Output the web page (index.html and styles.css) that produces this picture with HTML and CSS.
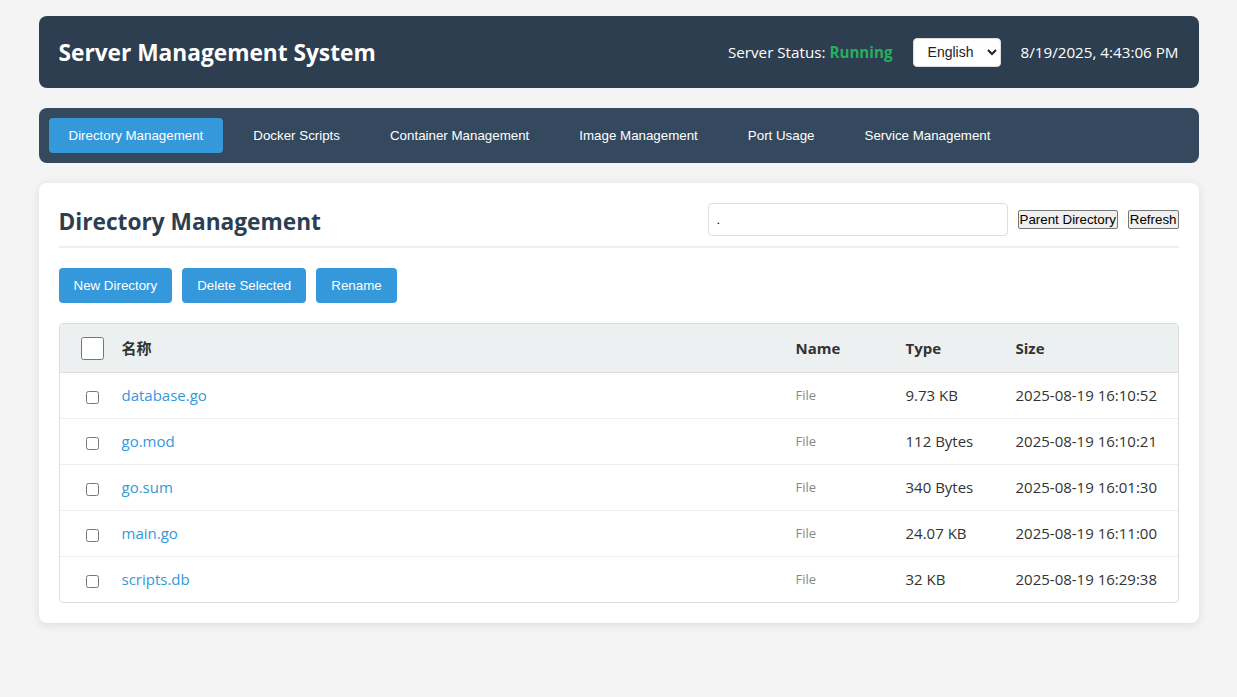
FILE: index.html
```html
<!DOCTYPE html>
<html lang="en">
<head>
<meta charset="utf-8">
<title>Server Management System</title>
<link rel="stylesheet" href="styles.css">
</head>
<body>
<div class="container">
  <header class="topbar">
    <h1 class="title">Server Management System</h1>
    <div class="topbar-right">
      <span class="status">Server Status: <strong class="running">Running</strong></span>
      <select class="lang"><option>English</option><option>中文</option></select>
      <span class="clock">8/19/2025, 4:43:06 PM</span>
    </div>
  </header>

  <nav class="tabs">
    <button class="tab active">Directory Management</button>
    <button class="tab">Docker Scripts</button>
    <button class="tab">Container Management</button>
    <button class="tab">Image Management</button>
    <button class="tab">Port Usage</button>
    <button class="tab">Service Management</button>
  </nav>

  <section class="card">
    <div class="card-head">
      <h2 class="card-title">Directory Management</h2>
      <div class="path-tools">
        <input class="path" type="text" value=".">
        <button class="plain">Parent Directory</button>
        <button class="plain">Refresh</button>
      </div>
    </div>

    <div class="actions">
      <button class="btn">New Directory</button>
      <button class="btn">Delete Selected</button>
      <button class="btn">Rename</button>
    </div>

    <div class="table-wrap">
      <table class="files">
        <colgroup>
          <col class="c-check"><col><col class="c-mid"><col class="c-mid"><col class="c-last">
        </colgroup>
        <thead>
          <tr>
            <th class="chk"><input type="checkbox" class="big"></th>
            <th>名称</th>
            <th>Name</th>
            <th>Type</th>
            <th>Size</th>
          </tr>
        </thead>
        <tbody>
          <tr><td class="chk"><input type="checkbox"></td><td><a class="fname" href="#">database.go</a></td><td class="kind">File</td><td>9.73 KB</td><td>2025-08-19 16:10:52</td></tr>
          <tr><td class="chk"><input type="checkbox"></td><td><a class="fname" href="#">go.mod</a></td><td class="kind">File</td><td>112 Bytes</td><td>2025-08-19 16:10:21</td></tr>
          <tr><td class="chk"><input type="checkbox"></td><td><a class="fname" href="#">go.sum</a></td><td class="kind">File</td><td>340 Bytes</td><td>2025-08-19 16:01:30</td></tr>
          <tr><td class="chk"><input type="checkbox"></td><td><a class="fname" href="#">main.go</a></td><td class="kind">File</td><td>24.07 KB</td><td>2025-08-19 16:11:00</td></tr>
          <tr><td class="chk"><input type="checkbox"></td><td><a class="fname" href="#">scripts.db</a></td><td class="kind">File</td><td>32 KB</td><td>2025-08-19 16:29:38</td></tr>
        </tbody>
      </table>
    </div>
  </section>
</div>
</body>
</html>
```

FILE: styles.css
```css
* { box-sizing: border-box; }

body {
  margin: 0;
  background: #f4f4f4;
  font-family: "Segoe UI", "Open Sans", "Noto Sans CJK SC", sans-serif;
  color: #333;
}

.container {
  max-width: 1200px;
  margin: 0 auto;
  padding: 16px 20px;
  display: flex;
  flex-direction: column;
  gap: 20px;
}

.topbar {
  background: #2c3e50;
  color: #fff;
  border-radius: 8px;
  padding: 20px;
  height: 72px;
  display: flex;
  align-items: center;
  justify-content: space-between;
}

.title {
  margin: 0;
  font-size: 22.7px;
  line-height: 30px;
  padding-top: 2px;
  font-weight: 700;
}

.topbar-right {
  display: flex;
  align-items: center;
  gap: 20px;
  font-size: 15.2px;
}

.running { color: #27ae60; font-weight: 700; }

.lang {
  width: 88px;
  height: 29px;
  border: 1px solid #ddd;
  border-radius: 4px;
  background: #fff;
  font-family: "Liberation Sans", Arial, sans-serif;
  font-size: 14px;
  padding: 0 6px 0 10px;
  color: #222;
}

.tabs {
  background: #34495e;
  border-radius: 8px;
  padding: 10px;
  display: flex;
  gap: 10px;
}

.tab {
  border: 0;
  background: transparent;
  color: #fff;
  font-family: "Liberation Sans", Arial, sans-serif;
  font-size: 13.333px;
  line-height: 15px;
  padding: 10px 20px;
  border-radius: 4px;
}

.tab.active { background: #3498db; }

.card {
  background: #fff;
  border-radius: 8px;
  padding: 20px;
  box-shadow: 0 2px 10px rgba(0, 0, 0, 0.1);
}

.card-head {
  display: flex;
  align-items: center;
  justify-content: space-between;
  height: 45px;
  padding-bottom: 10px;
  border-bottom: 2px solid #ecf0f1;
  margin-bottom: 20px;
}

.card-title {
  margin: 0;
  padding-top: 4px;
  line-height: 29px;
  font-size: 22.7px;
  font-weight: 700;
  color: #2c3e50;
}

.path-tools {
  display: flex;
  align-items: center;
  gap: 10px;
}

.path {
  width: 300px;
  height: 33px;
  padding: 8px;
  border: 1px solid #ddd;
  border-radius: 4px;
  font-size: 13px;
  font-family: "Liberation Sans", Arial, sans-serif;
}

.plain {
  font-family: "Liberation Sans", Arial, sans-serif;
  font-size: 13.333px;
  line-height: 15px;
  padding: 1px 1px;
  color: #000;
  background: #efefef;
  border: 1px solid #767676;
  border-radius: 2px;
}

.actions {
  display: flex;
  gap: 10px;
  margin-bottom: 20px;
}

.btn {
  border: 0;
  background: #3498db;
  color: #fff;
  font-family: "Liberation Sans", Arial, sans-serif;
  font-size: 13.333px;
  line-height: 15px;
  padding: 10px 15px;
  border-radius: 4px;
}

.table-wrap {
  border: 1px solid #ddd;
  border-radius: 4px;
  overflow: hidden;
}

.files {
  width: 100%;
  border-collapse: collapse;
  table-layout: fixed;
  font-size: 15px;
}

.c-check { width: 62px; }
.c-mid { width: 110px; }
.c-last { width: 162px; }

.files th, .files td {
  padding: 12px 0;
  text-align: left;
  line-height: 21px;
}

.files th {
  background: #ecf0f1;
  color: #333;
  font-weight: 700;
  border-bottom: 1px solid #ddd;
  line-height: 23px;
}

.files td { border-bottom: 1px solid #eee; }
.files tbody tr:last-child td { border-bottom: 0; }

.files .chk { text-align: center; padding-left: 3px; }
.files .chk input { margin: 0; vertical-align: middle; }
.files .chk input.big { width: 23px; height: 23px; }

.fname { color: #3498db; text-decoration: none; }
.kind { color: #7f8c8d; font-size: 13px; }
```
